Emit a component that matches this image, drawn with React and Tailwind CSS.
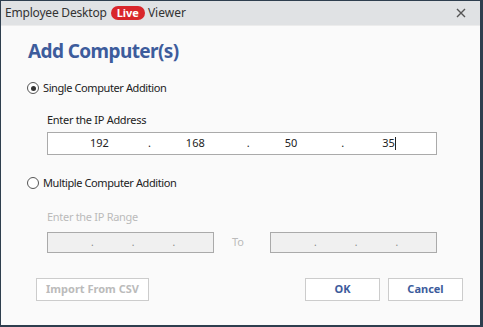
export default function App() {
  const font = { fontFamily: '"Noto Sans", "Open Sans", sans-serif' };
  return (
    <div className="w-[483px] h-[327px] bg-[#2e3e4e] p-[1px] pr-[3px] pb-[2px]" style={font}>
      <div className="w-full h-full flex flex-col bg-[#fafafa]">
        <div className="h-[25px] bg-[#e0e2e4] flex items-center pl-[4px] pr-[14px] border-b border-[#ececec]">
          <span className="text-[12px] text-[#333] tracking-[-0.2px]">Employee Desktop</span>
          <span className="ml-[4px] bg-[#d9262b] text-white text-[11px] font-bold rounded-full px-[6px] leading-[14px]">Live</span>
          <span className="ml-[3px] text-[12px] text-[#333]">Viewer</span>
          <span className="ml-auto text-[#555]">
            <svg width="10" height="10" viewBox="0 0 10 10"><path d="M1 1L9 9M9 1L1 9" stroke="#555" strokeWidth="1.4" /></svg>
          </span>
        </div>
        <div className="flex-1 flex flex-col pl-[26px] pr-[43px]">
          <div className="mt-[12px] text-[19px] font-bold text-[#3d5c9c] leading-[26px] pl-[1px] tracking-[-0.6px]">Add Computer(s)</div>
          <div className="mt-[16px] flex items-center gap-[4px]">
            <span className="w-[12px] h-[12px] rounded-full border border-[#555] flex items-center justify-center bg-white">
              <span className="w-[5px] h-[5px] rounded-full bg-[#333]"></span>
            </span>
            <span className="text-[11px] text-[#222] tracking-[-0.4px]">Single Computer Addition</span>
          </div>
          <div className="mt-[15px] ml-[20px] text-[11px] text-[#222] tracking-[-0.3px]">Enter the IP Address</div>
          <div className="mt-[4px] ml-[20px] h-[23px] border border-[#aaa] bg-white flex items-center text-[11px] text-[#222]">
            <span className="ml-[42px]">192</span>
            <span className="ml-[39px]">.</span>
            <span className="ml-[35px]">168</span>
            <span className="ml-[42px]">.</span>
            <span className="ml-[35px]">50</span>
            <span className="ml-[44px]">.</span>
            <span className="ml-[38px]">35</span>
            <span className="w-[1px] h-[13px] bg-[#222]"></span>
          </div>
          <div className="mt-[20px] flex items-center gap-[4px]">
            <span className="w-[12px] h-[12px] rounded-full border border-[#555] bg-white"></span>
            <span className="text-[11px] text-[#222] tracking-[-0.4px]">Multiple Computer Addition</span>
          </div>
          <div className="mt-[17px] ml-[20px] text-[11px] text-[#bbb] tracking-[-0.3px]">Enter the IP Range</div>
          <div className="mt-[7px] ml-[20px] flex items-center">
            <div className="w-[167px] h-[21px] border border-[#aaa] bg-[#f0f0f0] flex items-center text-[10px] text-[#888]">
              <span className="ml-[43px]">.</span><span className="ml-[38px]">.</span><span className="ml-[38px]">.</span>
            </div>
            <span className="ml-[18px] text-[11px] text-[#bbb]">To</span>
            <div className="ml-auto w-[167px] h-[21px] border border-[#aaa] bg-[#f0f0f0] flex items-center text-[10px] text-[#888]">
              <span className="ml-[43px]">.</span><span className="ml-[38px]">.</span><span className="ml-[38px]">.</span>
            </div>
          </div>
          <div className="mt-[25px] flex items-center -mr-[26px]">
            <button className="ml-[9px] w-[113px] h-[23px] border border-[#ccc] bg-white text-[11px] font-bold text-[#bbb]">Import From CSV</button>
            <button className="ml-auto w-[75px] h-[23px] border border-[#ccc] bg-white text-[11px] font-bold text-[#3d5c9c]">OK</button>
            <button className="ml-[8px] w-[75px] h-[23px] border border-[#ccc] bg-white text-[11px] font-bold text-[#3d5c9c]">Cancel</button>
          </div>
        </div>
      </div>
    </div>
  );
}
